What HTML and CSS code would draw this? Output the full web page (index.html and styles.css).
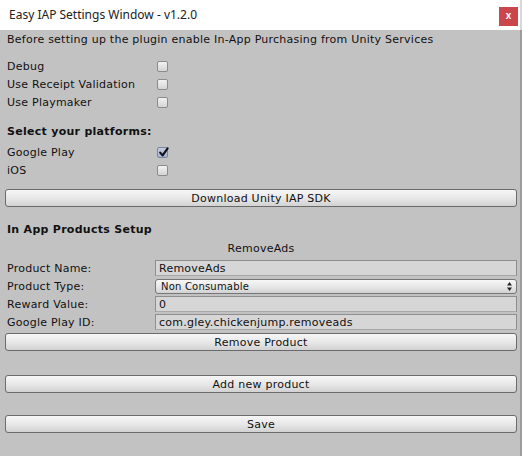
FILE: index.html
```html
<!DOCTYPE html>
<html>
<head>
<meta charset="utf-8">
<link rel="stylesheet" href="styles.css">
</head>
<body>
<div class="window">
  <div class="titlebar">
    <span class="title">Easy IAP Settings Window - v1.2.0</span>
    <span class="close">x</span>
  </div>
  <div class="content">
    <div class="intro">Before setting up the plugin enable In-App Purchasing from Unity Services</div>

    <div class="toggles">
      <div class="row"><span class="label">Debug</span><span class="check"></span></div>
      <div class="row"><span class="label">Use Receipt Validation</span><span class="check"></span></div>
      <div class="row"><span class="label">Use Playmaker</span><span class="check"></span></div>
    </div>

    <div class="heading platforms">Select your platforms:</div>
    <div class="toggles tight">
      <div class="row"><span class="label">Google Play</span><span class="check checked"><svg viewBox="0 0 11 11" width="11" height="11"><path d="M2.2 5.6 L4.6 8.4 L9.6 1.4" fill="none" stroke="#10131c" stroke-width="2.2" stroke-linecap="round" stroke-linejoin="round"/></svg></span></div>
      <div class="row"><span class="label">iOS</span><span class="check"></span></div>
    </div>

    <div class="button download">Download Unity IAP SDK</div>

    <div class="heading products">In App Products Setup</div>
    <div class="product-title">RemoveAds</div>

    <div class="fields">
      <div class="frow"><span class="flabel">Product Name:</span><span class="field">RemoveAds</span></div>
      <div class="frow"><span class="flabel">Product Type:</span><span class="popup"><span class="popup-text">Non Consumable</span><svg class="arrows" viewBox="0 0 5 9" width="5" height="9"><path d="M2.5 0 L5 3.5 L0 3.5 Z M2.5 9 L5 5.5 L0 5.5 Z" fill="#222"/></svg></span></div>
      <div class="frow"><span class="flabel">Reward Value:</span><span class="field">0</span></div>
      <div class="frow"><span class="flabel">Google Play ID:</span><span class="field">com.gley.chickenjump.removeads</span></div>
    </div>

    <div class="button remove">Remove Product</div>
    <div class="button add">Add new product</div>
    <div class="button save">Save</div>
  </div>
</div>
</body>
</html>
```

FILE: styles.css
```css
* { box-sizing: border-box; }

html, body {
  margin: 0;
  padding: 0;
  width: 522px;
  height: 456px;
  overflow: hidden;
  background: #c2c2c2;
}

.window {
  width: 522px;
  height: 456px;
  display: flex;
  flex-direction: column;
  font-family: "DejaVu Sans", Verdana, sans-serif;
  font-size: 11px;
  color: #111;
}

.titlebar {
  height: 30px;
  flex: none;
  background: #ffffff;
  display: flex;
  align-items: center;
  justify-content: space-between;
  padding-left: 9px;
  padding-right: 2px;
  border-right: 2px solid #d8d8d8;
}

.title {
  font-family: "Noto Sans", "Open Sans", sans-serif;
  font-size: 12px;
  color: #222;
  margin-top: -1px;
}

.close {
  width: 19px;
  height: 19px;
  background: #c9474a;
  color: #fff;
  font-family: "Liberation Sans", Arial, sans-serif;
  font-weight: bold;
  font-size: 10px;
  display: flex;
  align-items: center;
  justify-content: center;
  margin-top: 2px;
  line-height: 1;
}

.content {
  flex: 1;
  display: flex;
  flex-direction: column;
  padding: 0 3px 0 5px;
  background: #c3c2c3;
  border-right: 2px solid #9c9c9c;
  letter-spacing: 0.24px;
}

.intro {
  height: 18px;
  line-height: 18px;
  margin-top: 1px;
  padding-left: 2px;
}

.toggles {
  display: flex;
  flex-direction: column;
  margin-top: 8px;
}
.toggles.tight { margin-top: 2px; }

.row {
  height: 18px;
  display: flex;
  align-items: center;
  padding-left: 2px;
}

.label {
  width: 150px;
  flex: none;
}

.check {
  width: 11px;
  height: 11px;
  border: 1px solid #8c8c8c;
  border-radius: 2px;
  background: linear-gradient(#f2f2f2, #d4d4d4);
  display: flex;
  align-items: center;
  justify-content: center;
  position: relative;
}
.check.checked {
  background: linear-gradient(#c4cbe0, #a7b2d0);
  border-color: #7d869f;
}
.check svg {
  position: absolute;
  left: 0;
  top: -1px;
}

.heading {
  height: 18px;
  line-height: 18px;
  font-weight: bold;
  padding-left: 2px;
  letter-spacing: 0.28px;
}
.heading.platforms { margin-top: 12px; }
.heading.products { margin-top: 14px; }

.button {
  height: 18px;
  border: 1px solid #6b6b6b;
  border-radius: 3px;
  background: linear-gradient(#f6f6f6, #e8e8e8 50%, #d2d2d2);
  display: flex;
  align-items: center;
  justify-content: center;
  color: #111;
}
.button.download { margin-top: 10px; }
.button.remove { margin-top: 3px; }
.button.add { margin-top: 24px; }
.button.save { margin-top: 22px; }

.product-title {
  height: 18px;
  line-height: 18px;
  margin-top: 1px;
  text-align: center;
}

.fields {
  display: flex;
  flex-direction: column;
  gap: 2px;
  margin-top: 2px;
}

.frow {
  height: 16px;
  display: flex;
  align-items: center;
  padding-left: 2px;
}

.flabel {
  width: 148px;
  flex: none;
}

.field {
  flex: 1;
  height: 16px;
  background: #d7d6d7;
  border: 1px solid #8e8e8e;
  border-bottom-color: #a8a8a8;
  display: flex;
  align-items: center;
  padding-left: 3px;
}

.popup {
  flex: 1;
  height: 15px;
  border: 1px solid #777;
  border-radius: 3px;
  background: linear-gradient(#f7f7f7, #e6e6e6 55%, #d2d2d2);
  display: flex;
  align-items: center;
  justify-content: space-between;
  padding: 0 4px 0 5px;
  font-size: 10px;
  letter-spacing: 0.2px;
}
```
